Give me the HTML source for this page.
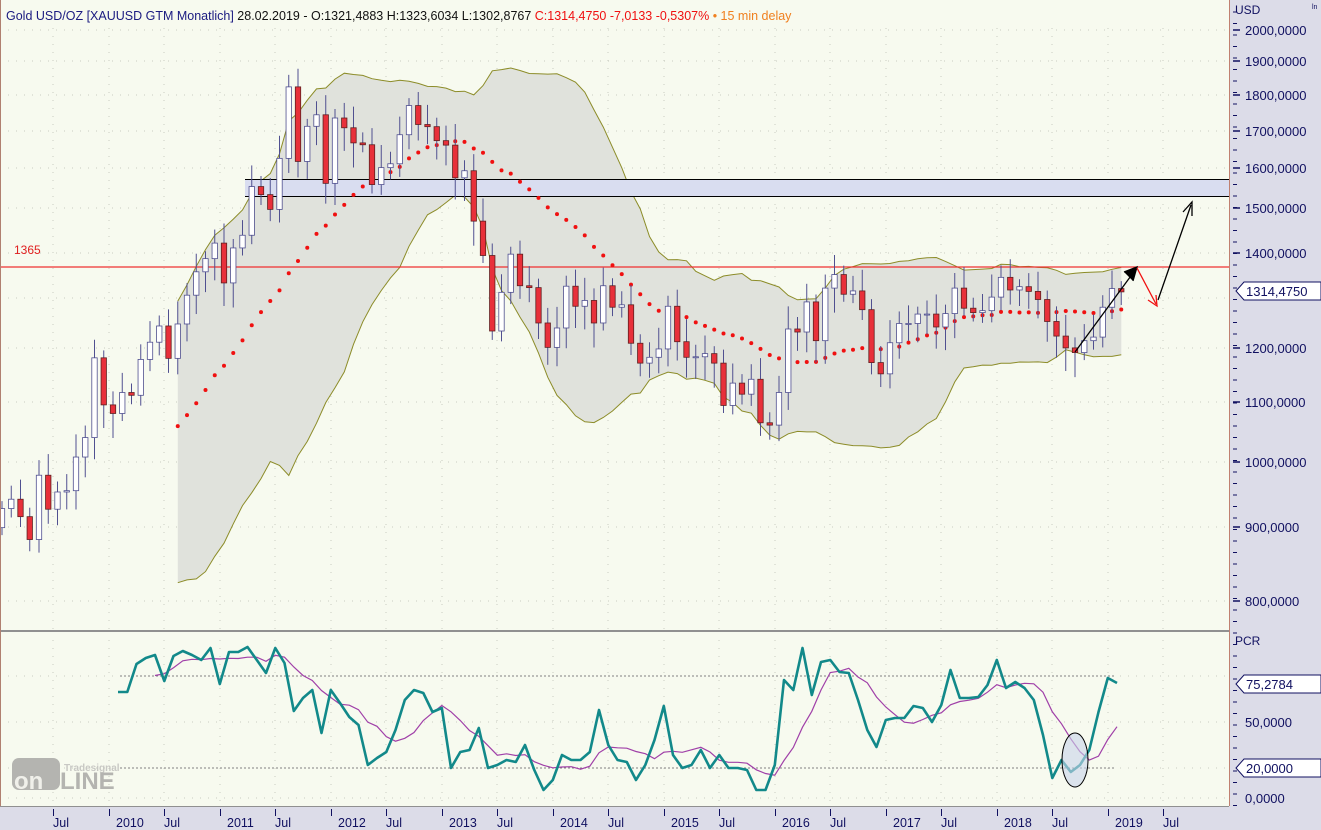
<!DOCTYPE html>
<html><head><meta charset="utf-8"><style>
html,body{margin:0;padding:0;background:#f7faef;}
svg{display:block;font-family:"Liberation Sans",Tahoma,sans-serif;}
</style></head><body>
<svg id="s" width="1321" height="830" xmlns="http://www.w3.org/2000/svg">
<rect x="0" y="0" width="1321" height="830" fill="#f7faef"/>
<g id="grid"></g>
<g id="bands"></g>
<rect x="245" y="179" width="984" height="17" fill="#d9ddf0"/>
<line x1="245" y1="179.5" x2="1229" y2="179.5" stroke="#000"/>
<line x1="245" y1="196.5" x2="1229" y2="196.5" stroke="#000"/>
<line x1="0" y1="267" x2="1229" y2="267" stroke="#f03030" stroke-width="1.3"/>
<text x="14" y="254" font-size="12" fill="#e02020">1365</text>
<g id="dots"></g>
<g id="candles"></g>
<g stroke="#000" stroke-width="1.3" fill="none">
<line x1="1075" y1="352" x2="1136" y2="269"/>
<polyline points="1124,272 1137,267 1133,281" fill="#000"/>
<line x1="1158" y1="300" x2="1191" y2="205"/>
<polyline points="1183,212 1192,202 1192,216"/>
</g>
<g stroke="#f01010" stroke-width="1.3" fill="none">
<line x1="1137" y1="268" x2="1156" y2="304"/>
<polyline points="1148,300 1157,306 1156,295"/>
</g>
<rect x="0" y="630" width="1229" height="2" fill="#909090"/>
<line x1="0.5" y1="0" x2="0.5" y2="806" stroke="#b08070"/>
<g id="lower"></g>
<ellipse cx="1075" cy="760" rx="13" ry="27" fill="#c8d4ea" fill-opacity="0.6" stroke="#000" stroke-width="1"/>
<rect x="1229" y="0" width="92" height="830" fill="#dcdce8"/>
<line x1="1229.5" y1="0" x2="1229.5" y2="806" stroke="#c08070"/>
<rect x="0" y="806" width="1229" height="24" fill="#dcdce8"/>
<line x1="0" y1="806.5" x2="1229" y2="806.5" stroke="#909090"/>
<g id="axis" fill="#101060" font-size="13"></g>
<text x="1235" y="14" font-size="12" fill="#101060">USD</text>
<text x="1235" y="645" font-size="12" fill="#101060">PCR</text>
<text x="1312" y="9" font-size="7" fill="#101060">ln</text>
<text x="6" y="20" font-size="12.5"><tspan fill="#1a1a80">Gold USD/OZ [XAUUSD GTM Monatlich]</tspan><tspan fill="#111"> 28.02.2019 - O:1321,4883 H:1323,6034 L:1302,8767 </tspan><tspan fill="#f01010">C:1314,4750 -7,0133 -0,5307% </tspan><tspan fill="#f08020">• 15 min delay</tspan></text>
<g>
<rect x="12" y="758" width="48" height="32" rx="7" fill="#b4b4b0"/>
<text x="64" y="771" font-size="10" font-weight="bold" fill="#c8c8c4">Tradesignal</text>
<text x="14" y="789" font-size="24" font-weight="bold" fill="#f0f0ea">on</text>
<text x="60" y="789" font-size="24" font-weight="bold" fill="#b4b4b0">LINE</text>
</g>
</svg>
<script>
const NS="http://www.w3.org/2000/svg";
function el(p,t,a,txt){const e=document.createElementNS(NS,t);for(const k in a)e.setAttribute(k,a[k]);if(txt!=null)e.textContent=txt;document.getElementById(p).appendChild(e);return e;}
const Y=p=>462-623*Math.log(p/1000);
const X=i=>113+(i-12)*9.25;
const C=[928,942,916,883,979,927,953,955,1008,1040,1182,1096,
1081,1118,1113,1179,1212,1244,1181,1248,1307,1357,1386,1421,
1333,1410,1439,1556,1536,1500,1628,1826,1620,1714,1746,1564,
1737,1710,1669,1664,1561,1604,1614,1691,1772,1719,1713,1675,
1663,1578,1596,1472,1393,1234,1313,1396,1327,1323,1250,1202,
1240,1326,1284,1296,1250,1327,1282,1287,1210,1172,1183,1199,
1284,1213,1183,1184,1190,1172,1095,1135,1115,1142,1065,1061,
1118,1238,1232,1293,1215,1322,1351,1309,1316,1277,1173,1152,
1211,1249,1249,1268,1268,1242,1269,1322,1280,1271,1275,1303,
1345,1318,1325,1315,1298,1253,1224,1201,1192,1215,1222,1282,1321,1314];
const ticks=[53,109,164,220,275,331,386,442,497,553,608,664,719,775,830,886,941,997,1052,1108,1163];
const labs=["Jul","2010","Jul","2011","Jul","2012","Jul","2013","Jul","2014","Jul","2015","Jul","2016","Jul","2017","Jul","2018","Jul","2019","Jul"];
ticks.forEach((x,i)=>{
 el("grid","line",{x1:x,y1:28,x2:x,y2:630,stroke:"#c8ccc0","stroke-dasharray":"1 7"});
 el("grid","line",{x1:x,y1:640,x2:x,y2:806,stroke:"#c8ccc0","stroke-dasharray":"1 7"});
 el("axis","line",{x1:x+0.5,y1:809,x2:x+0.5,y2:816,stroke:"#101060"});
 el("axis","text",{x:x+(labs[i]=="Jul"?0:7),y:827,"font-size":12.5},labs[i]);
});
const lv=[[2000,30],[1900,61],[1800,95],[1700,131],[1600,168],[1500,208],[1400,253],[1300,298],[1200,348],[1100,402],[1000,462],[900,527],[800,601]];
lv.forEach(([p,y])=>{
 el("grid","line",{x1:0,y1:y,x2:1229,y2:y,stroke:"#c8ccc0","stroke-dasharray":"1 7"});
 if(p!=1300){el("axis","line",{x1:1233,y1:y,x2:1240,y2:y,stroke:"#101060","stroke-width":1.5});
 el("axis","text",{x:1245,y:y+5},String(p)+",0000");}
});
for(let y=12;y<806;y+=11.5){el("axis","line",{x1:1233,y1:y,x2:1237,y2:y,stroke:"#101060"});}
[676,722,768,798].forEach(y=>el("grid","line",{x1:0,y1:y,x2:1229,y2:y,stroke:"#c8ccc0","stroke-dasharray":"1 7"}));
el("grid","line",{x1:120,y1:676,x2:1115,y2:676,stroke:"#808080","stroke-dasharray":"2 2"});
el("grid","line",{x1:120,y1:768,x2:1115,y2:768,stroke:"#808080","stroke-dasharray":"2 2"});
el("axis","text",{x:1245,y:727},"50,0000");
el("axis","text",{x:1245,y:803},"0,0000");
function tag(y,t){el("axis","path",{d:`M1236 ${y} l8 -9 h77 v18 h-77 z`,fill:"#fff",stroke:"#101060"});el("axis","text",{x:1246,y:y+5},t);}
tag(291,"1314,4750");tag(684,"75,2784");tag(768,"20,0000");
const N=20,mid=[],up=[],lo=[];
for(let i=N-1;i<C.length;i++){const s=C.slice(i-N+1,i+1);const m=s.reduce((a,b)=>a+b)/N;const sd=Math.sqrt(s.reduce((a,b)=>a+(b-m)**2,0)/N);mid.push([X(i),Y(m)]);up.push([X(i),Y(m+2*sd)]);lo.push([X(i),Y(m-2*sd)]);}
const ptxt=a=>a.map(p=>p[0].toFixed(1)+","+p[1].toFixed(1)).join(" ");
el("bands","polygon",{points:ptxt(up)+" "+ptxt(lo.slice().reverse()),fill:"#e0e2dc",stroke:"none"});
el("bands","polyline",{points:ptxt(up),fill:"none",stroke:"#8c8c28","stroke-width":1});
el("bands","polyline",{points:ptxt(lo),fill:"none",stroke:"#8c8c28","stroke-width":1});
mid.forEach(p=>el("dots","circle",{cx:p[0],cy:p[1],r:2,fill:"#f01010"}));
let prev=900;
C.forEach((c,i)=>{const o=prev;prev=c;const x=X(i);const hi=Math.max(o,c)*(1+0.012+((i*37)%11)/400),lw=Math.min(o,c)*(1-0.012-((i*53)%13)/450);
 el("candles","line",{x1:x,y1:Y(hi),x2:x,y2:Y(lw),stroke:"#505090"});
 const t=Y(Math.max(o,c)),b=Y(Math.min(o,c));
 el("candles","rect",{x:x-2.7,y:t,width:5.4,height:Math.max(1,b-t),fill:c>=o?"#fff":"#e8303a",stroke:c>=o?"#505090":"#602020","stroke-width":0.8});
});
const P=[692,692,664,658,655,681,656,651,655,660,648,684,652,652,647,660,673,648,663,711,698,690,733,690,703,717,725,765,758,752,730,700,690,693,712,708,768,752,750,728,768,765,760,762,745,770,790,780,755,760,760,752,710,745,760,762,780,765,740,706,755,768,765,750,768,755,768,768,770,790,790,765,680,690,648,695,662,660,672,673,700,730,747,720,718,718,706,708,722,705,670,698,698,697,685,660,688,682,688,700,735,778,760,772,765,750,712,678,683];
const pp=P.map((y,i)=>[118+i*9.25,y]);
const sm=[];for(let i=4;i<P.length;i++){let s=0;for(let k=0;k<6;k++)s+=P[Math.max(0,i-k)];sm.push([118+i*9.25,s/6]);}
el("lower","polyline",{points:ptxt(sm),fill:"none",stroke:"#a040a8","stroke-width":1.2});
el("lower","polyline",{points:ptxt(pp),fill:"none",stroke:"#12898a","stroke-width":2.6,"stroke-linejoin":"round"});
</script>
</body></html>
